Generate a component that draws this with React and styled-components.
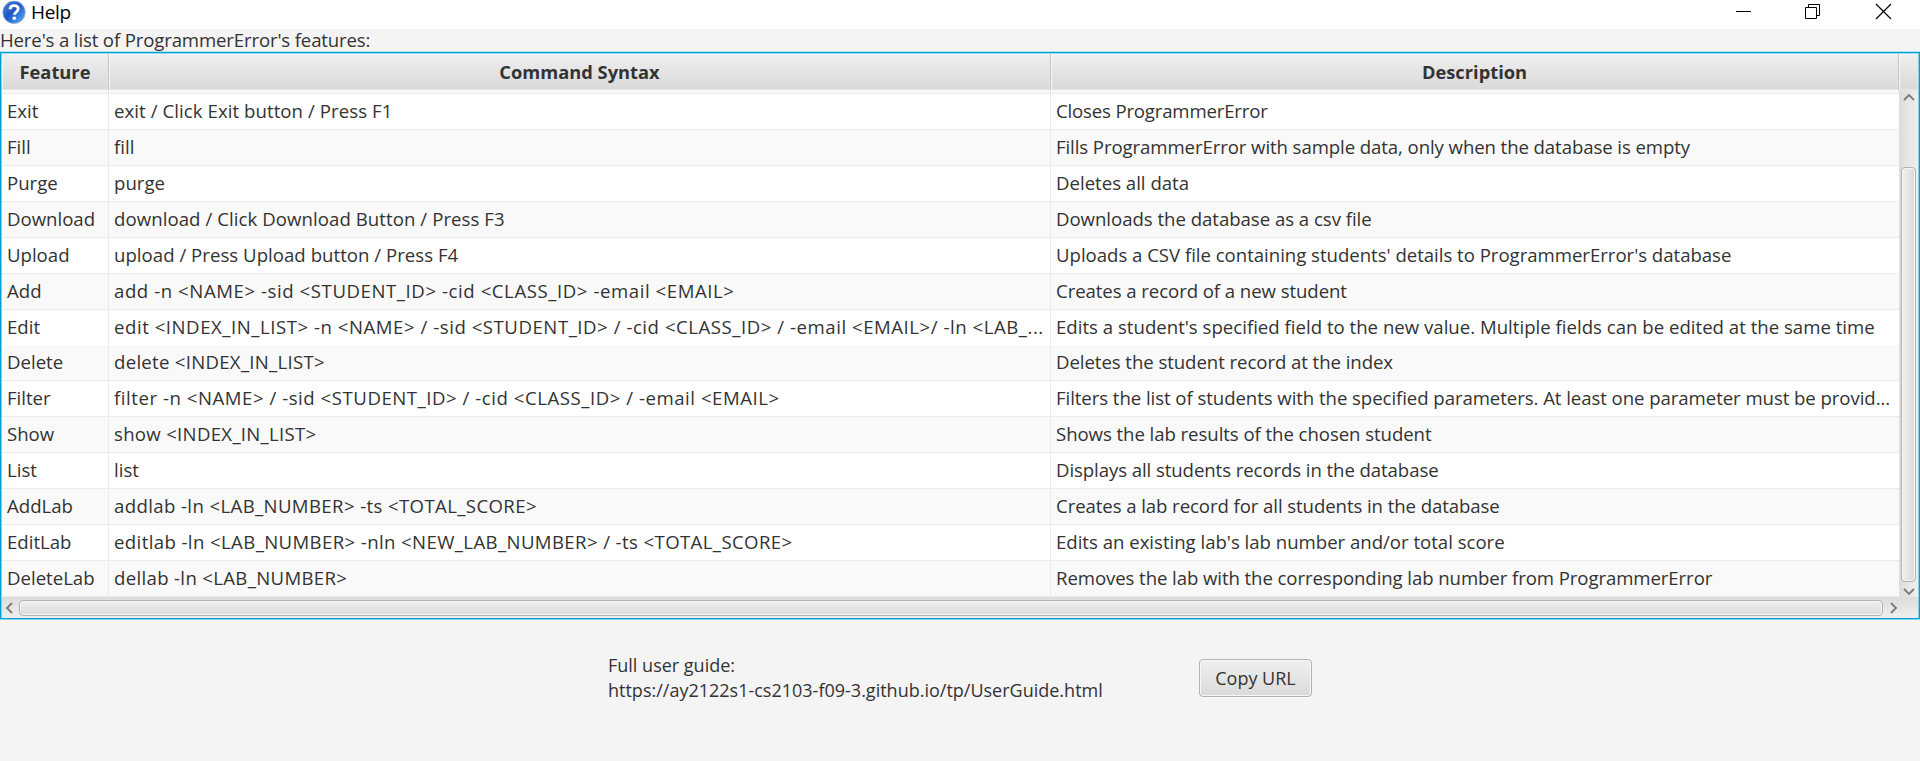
import React from 'react';
import styled, { createGlobalStyle } from 'styled-components';

const Global = createGlobalStyle`
  * { box-sizing: border-box; }
  body { margin: 0; background: #f4f4f4; overflow: hidden; }
`;

const Window = styled.div`
  width: 1920px;
  height: 761px;
  display: flex;
  flex-direction: column;
  background: #f4f4f4;
  color: #333;
  font: 18.6px/22px 'Open Sans', 'Noto Sans', sans-serif;
  white-space: pre;
`;

const TitleBar = styled.header`
  height: 29px;
  flex: none;
  display: flex;
  align-items: flex-start;
  background: #fff;
  color: #000;
`;

const Title = styled.h1`
  margin: 1px 0 0 5px;
  flex: 1;
  font-size: 19px;
  font-weight: 400;
  line-height: 22px;
  letter-spacing: -0.35px;
`;

const Caption = styled.div`
  height: 23px;
  flex: none;
  line-height: 21px;
  letter-spacing: -0.14px;
`;

const Table = styled.section`
  height: 567px;
  flex: none;
  display: flex;
  flex-direction: column;
  padding: 0 1px;
  border: 1px solid #039ed3;
  box-shadow: 0 -1px #b5e0ee, 0 1px #8fd6ee, inset 0 0 0 1px #81d0ea;
`;

const Header = styled.div`
  height: 37px;
  flex: none;
  display: grid;
  grid-template-columns: 107px 942px 848px 1fr;
`;

const HeaderCell = styled.div`
  border-top: 1px solid #9adcf0;
  border-right: 1px solid #c3c3c3;
  border-bottom: 1px solid #c3c3c3;
  box-shadow: inset 1px 1px #f8f8f8, inset -1px -1px #e6e6e6;
  background: linear-gradient(#efefef, #d9d9d9);
  text-align: center;
  font-size: 18.3px;
  font-weight: 700;
  line-height: 36px;
  &:last-child { border-right: 0; }
`;

const Middle = styled.div`
  height: 507px;
  flex: none;
  display: flex;
`;

const Rows = styled.div`
  width: 1897px;
`;

const Row = styled.div`
  height: ${p => p.$h || 36}px;
  display: grid;
  grid-template-columns: 107px 942px 1fr;
  background: ${p => (p.$odd ? '#f9f9f9' : '#fff')};
  border-bottom: ${p => (p.$h === 35 ? '0' : '1px solid #ebebeb')};
`;

const Cell = styled.div`
  padding-left: 5px;
  border-right: 1px solid #ebebeb;
  line-height: 34px;
  overflow: hidden;
  letter-spacing: ${p => p.$ls || 0}px;
  &:last-child { border-right: 0; }
`;

const VBar = styled.div`
  flex: 1;
  display: flex;
  flex-direction: column;
  align-items: center;
  background: linear-gradient(90deg, #dcdcdc, #efefef);
`;

const HBar = styled.div`
  height: 21px;
  flex: none;
  display: flex;
  align-items: center;
  background: linear-gradient(#dcdcdc, #efefef);
`;

const VThumb = styled.div`
  width: 15px;
  height: 415px;
  flex: none;
  border: 1px solid #b2b2b2;
  border-radius: 4px;
  background: linear-gradient(90deg, #f0f0f0, #dadada);
  box-shadow: inset 0 0 0 1px #f6f6f6;
`;

const HThumb = styled.div`
  width: 1864px;
  height: 16px;
  flex: none;
  border: 1px solid #b2b2b2;
  border-radius: 4px;
  background: linear-gradient(#f0f0f0, #dadada);
  box-shadow: inset 0 0 0 1px #f6f6f6;
`;

const VSlot = styled.div`
  height: ${p => p.$size}px;
  display: flex;
  padding-top: ${p => p.$pad}px;
`;

const HSlot = styled.div`
  width: ${p => p.$size}px;
  display: flex;
  padding-left: ${p => p.$pad}px;
`;

const Footer = styled.footer`
  flex: 1;
  display: flex;
  padding: 34px 0 0 608px;
  font-size: 18px;
  line-height: 25px;
`;

const Guide = styled.div`
  width: 591px;
`;

const Button = styled.button`
  width: 113px;
  height: 38px;
  margin-top: 6px;
  padding: 0;
  border: 1px solid #b2b2b2;
  border-radius: 4px;
  background: linear-gradient(#f0f0f0, #dadada);
  box-shadow: inset 0 0 0 1px #f7f7f7, 0 1px #fafafa;
  color: #333;
  font: 18px/36px 'Open Sans', sans-serif;
`;

const Chevron = ({ d, w, h }) => (
  <svg width={w} height={h} viewBox={`0 0 ${w} ${h}`} fill="none" stroke="#7b7b7b" strokeWidth="1.8">
    <path d={d} />
  </svg>
);

const HelpIcon = () => (
  <svg width="26" height="25" viewBox="0 0 26 25">
    <defs>
      <linearGradient id="ball" x1="0" y1="0" x2="1" y2="1">
        <stop offset="0" stopColor="#5585dc" />
        <stop offset=".45" stopColor="#1e55c6" />
        <stop offset="1" stopColor="#5cb8fa" />
      </linearGradient>
    </defs>
    <circle cx="14" cy="12.3" r="11.2" fill="url(#ball)" stroke="#8ba6d8" strokeWidth=".8" />
    <path d="M10 9.3c.2-2.6 1.9-3.7 4.2-3.7 2.4 0 4 1.2 4 3.2 0 3-3.7 3-3.7 6" fill="none" stroke="#fff" strokeWidth="2.8" />
    <circle cx="14.3" cy="18.2" r="1.8" fill="#fff" />
  </svg>
);

const WindowButtons = () => (
  <svg width="190" height="25" viewBox="1730 0 190 25" fill="none" stroke="#000">
    <path d="M1736 11.5h15M1805.5 7.5h11v11h-11zM1808.5 7.5v-3h11v11h-3" />
    <path d="M1876 4l15 15M1891 4l-15 15" strokeWidth="1.2" />
  </svg>
);

// Each row: feature, syntax, description, then the tracking of the last two.
const rows = [
  ['Exit', 'exit / Click Exit button / Press F1', 'Closes ProgrammerError', 0.07, -0.17],
  ['Fill', 'fill', 'Fills ProgrammerError with sample data, only when the database is empty', 0, -0.086],
  ['Purge', 'purge', 'Deletes all data', 0, 0],
  ['Download', 'download / Click Download Button / Press F3', 'Downloads the database as a csv file', 0.07, -0.03],
  ['Upload', 'upload / Press Upload button / Press F4', "Uploads a CSV file containing students' details to ProgrammerError's database", 0.03, -0.02],
  ['Add', 'add -n <NAME> -sid <STUDENT_ID> -cid <CLASS_ID> -email <EMAIL>', 'Creates a record of a new student', 0.57, -0.07],
  ['Edit', 'edit <INDEX_IN_LIST> -n <NAME> / -sid <STUDENT_ID> / -cid <CLASS_ID> / -email <EMAIL>/ -ln <LAB_...', "Edits a student's specified field to the new value. Multiple fields can be edited at the same time", 0.54, 0.01],
  ['Delete', 'delete <INDEX_IN_LIST>', 'Deletes the student record at the index', 0.28, -0.06],
  ['Filter', 'filter -n <NAME> / -sid <STUDENT_ID> / -cid <CLASS_ID> / -email <EMAIL>', 'Filters the list of students with the specified parameters. At least one parameter must be provid...', 0.54, -0.06],
  ['Show', 'show <INDEX_IN_LIST>', 'Shows the lab results of the chosen student', 0.3, -0.06],
  ['List', 'list', 'Displays all students records in the database', 0, -0.08],
  ['AddLab', 'addlab -ln <LAB_NUMBER> -ts <TOTAL_SCORE>', 'Creates a lab record for all students in the database', 0.38, -0.08],
  ['EditLab', 'editlab -ln <LAB_NUMBER> -nln <NEW_LAB_NUMBER> / -ts <TOTAL_SCORE>', "Edits an existing lab's lab number and/or total score", 0.39, -0.01],
  ['DeleteLab', 'dellab -ln <LAB_NUMBER>', 'Removes the lab with the corresponding lab number from ProgrammerError', 0.33, -0.08],
];

export default function App() {
  return (
    <Window>
      <Global />
      <TitleBar>
        <HelpIcon />
        <Title>Help</Title>
        <WindowButtons />
      </TitleBar>
      <Caption>Here's a list of ProgrammerError's features:</Caption>
      <Table>
        <Header>
          <HeaderCell>Feature</HeaderCell>
          <HeaderCell>Command Syntax</HeaderCell>
          <HeaderCell>Description</HeaderCell>
          <HeaderCell />
        </Header>
        <Middle>
          <Rows>
            <Row $odd $h={4}><Cell /><Cell /><Cell /></Row>
            {rows.map(([feature, syntax, description, syntaxLs, descriptionLs], i) => (
              <Row key={feature} $odd={i % 2 === 1} $h={feature === 'Edit' ? 35 : 36}>
                <Cell>{feature}</Cell>
                <Cell $ls={syntaxLs}>{syntax}</Cell>
                <Cell $ls={descriptionLs}>{description}</Cell>
              </Row>
            ))}
          </Rows>
          <VBar>
            <VSlot $size={77} $pad={3}><Chevron w={12} h={8} d="M1 7l5-5 5 5" /></VSlot>
            <VThumb />
            <VSlot $size={15} $pad={6}><Chevron w={12} h={8} d="M1 1l5 5 5-5" /></VSlot>
          </VBar>
        </Middle>
        <HBar>
          <HSlot $size={17} $pad={3}><Chevron w={8} h={12} d="M7 1L2 6l5 5" /></HSlot>
          <HThumb />
          <HSlot $size={17} $pad={7}><Chevron w={8} h={12} d="M1 1l5 5-5 5" /></HSlot>
        </HBar>
      </Table>
      <Footer>
        <Guide>{'Full user guide:\nhttps://ay2122s1-cs2103-f09-3.github.io/tp/UserGuide.html'}</Guide>
        <Button>Copy URL</Button>
      </Footer>
    </Window>
  );
}
